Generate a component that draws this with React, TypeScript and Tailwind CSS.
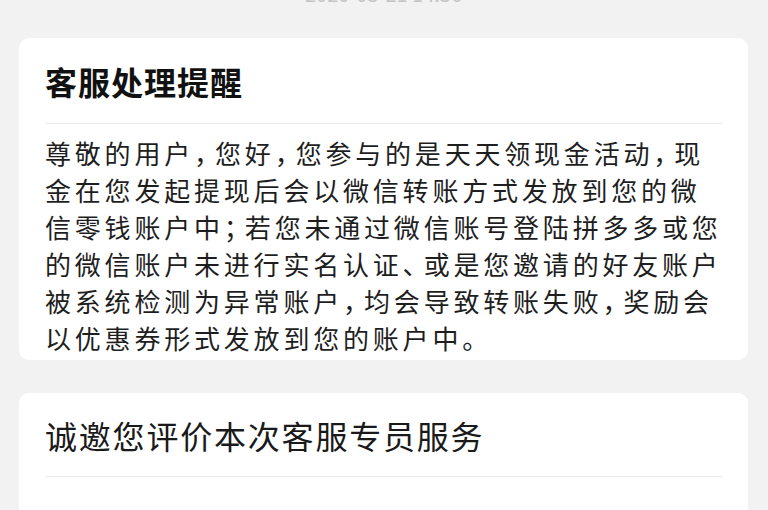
import React from "react";

const P = ({ c }: { c: string }) => <span className="tracking-[-5px]">{c}</span>;

export default function App() {
  const font = { fontFamily: '"Noto Sans CJK SC", "Noto Sans", sans-serif' };
  return (
    <div
      className="w-[768px] h-[510px] overflow-hidden bg-[#f2f2f2] px-[19px] pr-[20px]"
      style={font}
    >
      <div className="h-[38px] flex justify-center overflow-hidden">
        <div className="-mt-[17px] text-[20px] leading-[22px] text-[#c4c4c4]">
          2020-05-21 14:36
        </div>
      </div>

      <div className="bg-white rounded-[10px] px-[26px] pr-[25px] pb-[4px]">
        <div className="h-[86px] flex items-center border-b border-[#ececec]">
          <h1 className="text-[32px] leading-none font-bold tracking-[1px] text-[#111111]">
            客服处理提醒
          </h1>
        </div>
        <div className="pt-[10px] text-[26px] leading-[37px] tracking-[3.8px] text-[#1e1e1e] whitespace-nowrap">
          <div>
            尊敬的用户<P c="，" />您好<P c="，" />您参与的是天天领现金活动<P c="，" />现
          </div>
          <div>金在您发起提现后会以微信转账方式发放到您的微</div>
          <div>
            信零钱账户中<P c="；" />若您未通过微信账号登陆拼多多或您
          </div>
          <div>
            的微信账户未进行实名认证<P c="、" />或是您邀请的好友账户
          </div>
          <div>
            被系统检测为异常账户<P c="，" />均会导致转账失败<P c="，" />奖励会
          </div>
          <div>以优惠券形式发放到您的账户中。</div>
        </div>
      </div>

      <div className="mt-[33px] bg-white rounded-[10px] px-[26px] pr-[25px] h-[200px]">
        <div className="h-[84px] flex items-center border-b border-[#ececec]">
          <h2 className="text-[32px] leading-none font-normal tracking-[1.8px] text-[#1a1a1a]">
            诚邀您评价本次客服专员服务
          </h2>
        </div>
      </div>
    </div>
  );
}
